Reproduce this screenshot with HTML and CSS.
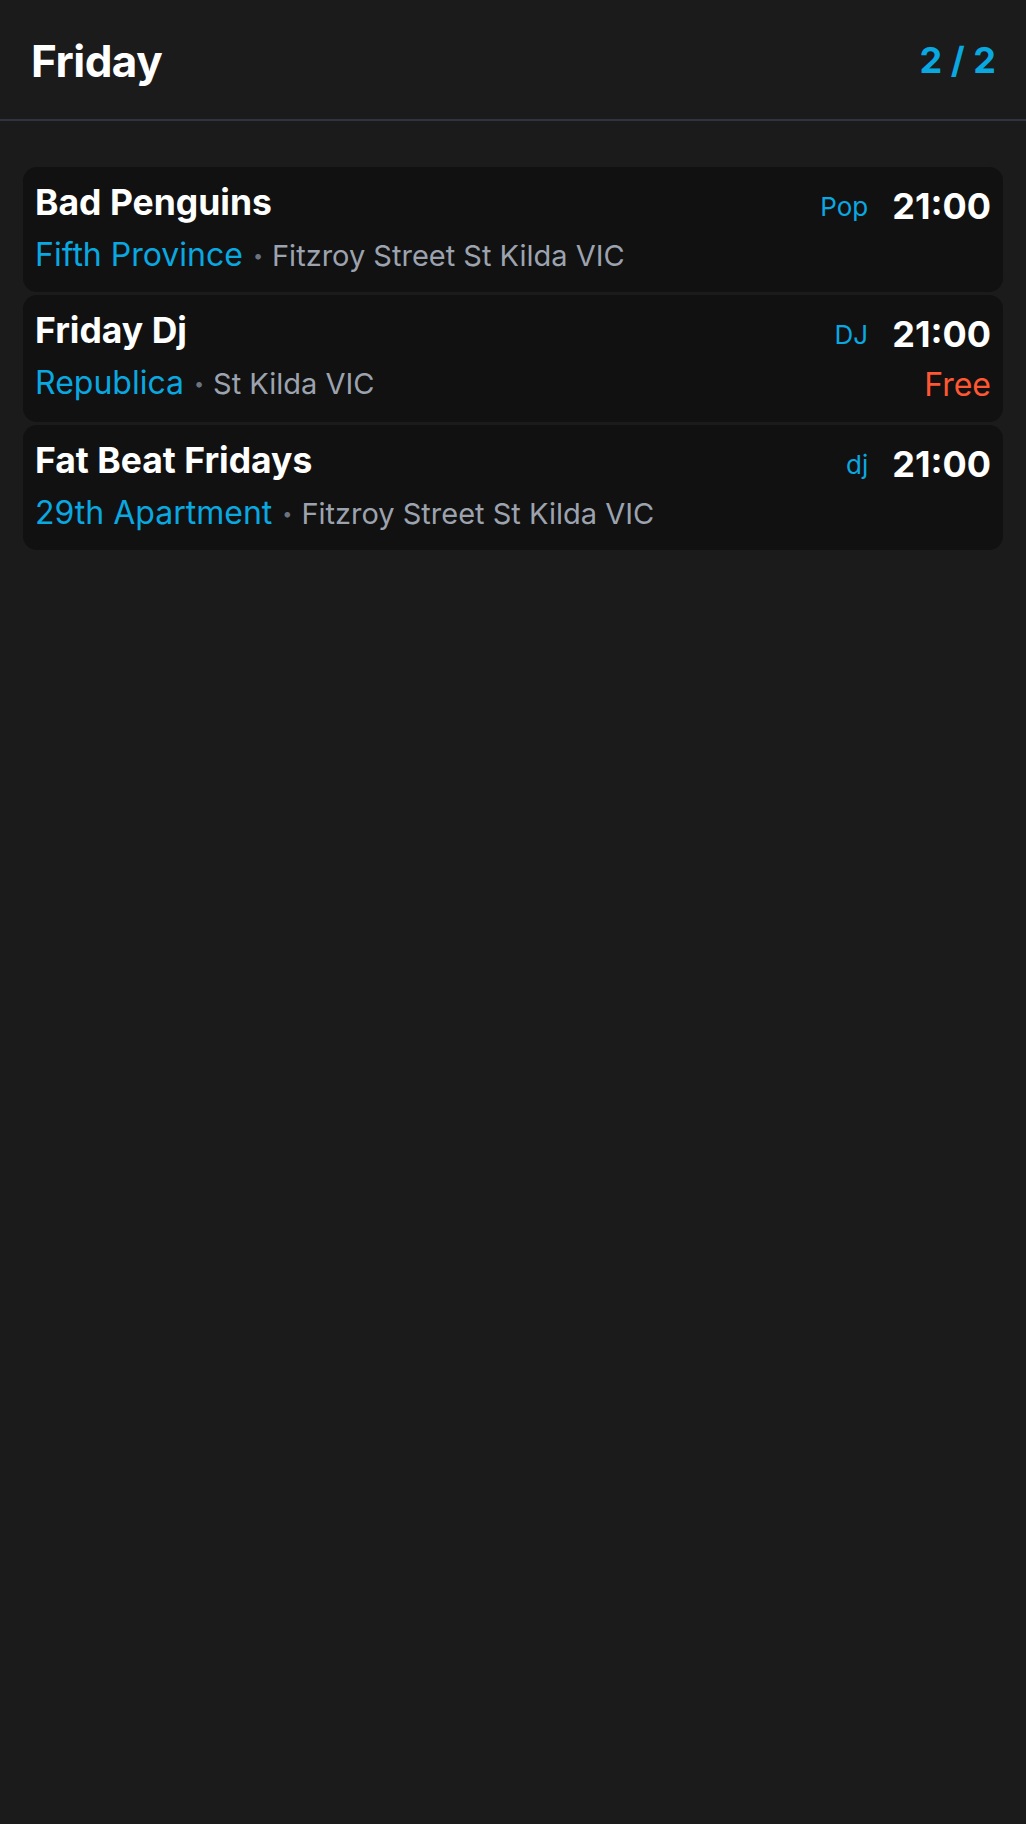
FILE: index.html
```html
<!DOCTYPE html>
<html lang="en">
<head>
<meta charset="utf-8">
<title>Friday</title>
<link rel="stylesheet" href="styles.css">
</head>
<body>
<header class="top">
  <h1 class="day">Friday</h1>
  <div class="pager">2 / 2</div>
</header>
<main class="list">
  <article class="card">
    <div class="info">
      <div class="title">Bad Penguins</div>
      <div class="place"><span class="venue">Fifth Province</span><span class="dot">•</span><span class="addr">Fitzroy Street St Kilda VIC</span></div>
    </div>
    <div class="meta">
      <div class="when"><span class="tag">Pop</span><span class="time">21:00</span></div>
    </div>
  </article>
  <article class="card">
    <div class="info">
      <div class="title">Friday Dj</div>
      <div class="place"><span class="venue">Republica</span><span class="dot">•</span><span class="addr">St Kilda VIC</span></div>
    </div>
    <div class="meta">
      <div class="when"><span class="tag">DJ</span><span class="time">21:00</span></div>
      <div class="price">Free</div>
    </div>
  </article>
  <article class="card">
    <div class="info">
      <div class="title">Fat Beat Fridays</div>
      <div class="place"><span class="venue">29th Apartment</span><span class="dot">•</span><span class="addr">Fitzroy Street St Kilda VIC</span></div>
    </div>
    <div class="meta">
      <div class="when"><span class="tag">dj</span><span class="time">21:00</span></div>
    </div>
  </article>
</main>
</body>
</html>
```
FILE: styles.css
```css
* { box-sizing: border-box; }
html, body {
  margin: 0;
  padding: 0;
  background: #1b1b1b;
  font-family: Inter, "Noto Sans", "Liberation Sans", sans-serif;
  color: #ffffff;
}
.top {
  height: 121px;
  display: flex;
  align-items: center;
  justify-content: space-between;
  padding: 0 30px 0 31px;
  border-bottom: 2px solid #2e3440;
}
.day {
  margin: 0;
  font-size: 44px;
  font-weight: 700;
  letter-spacing: -0.5px;
  line-height: 50px;
  position: relative;
  top: 1px;
}
.pager {
  font-size: 36px;
  font-weight: 700;
  color: #0aa8e0;
  line-height: 50px;
}
.list {
  padding: 46px 23px 0;
  display: flex;
  flex-direction: column;
  gap: 3px;
}
.card {
  background: #111111;
  border-radius: 14px;
  padding: 14px 12px 15px 12px;
  display: flex;
  justify-content: space-between;
  align-items: flex-start;
}
.info {
  display: flex;
  flex-direction: column;
  min-width: 0;
}
.title {
  font-size: 35.5px;
  font-weight: 700;
  line-height: 44px;
  height: 44px;
}
.place {
  margin-top: 8px;
  height: 44px;
  font-size: 32px;
  line-height: 44px;
  white-space: nowrap;
}
.venue {
  color: #0aa8e0;
}
.dot {
  color: #6b7280;
  font-size: 18px;
  line-height: 1;
  margin: 0 9px 0 10px;
  position: relative;
  top: -4px;
}
.addr {
  color: #9ca3af;
  font-size: 29px;
  line-height: 1;
}
.meta {
  display: flex;
  flex-direction: column;
  align-items: flex-end;
}
.when {
  display: flex;
  align-items: flex-start;
  gap: 24px;
  height: 50px;
}
.tag {
  color: #0aa8e0;
  font-size: 26px;
  line-height: 52px;
}
.time {
  font-size: 36px;
  font-weight: 700;
  line-height: 50px;
}
.price {
  margin-top: 4px;
  color: #ff5733;
  font-size: 32px;
  line-height: 44px;
  height: 44px;
}
```
